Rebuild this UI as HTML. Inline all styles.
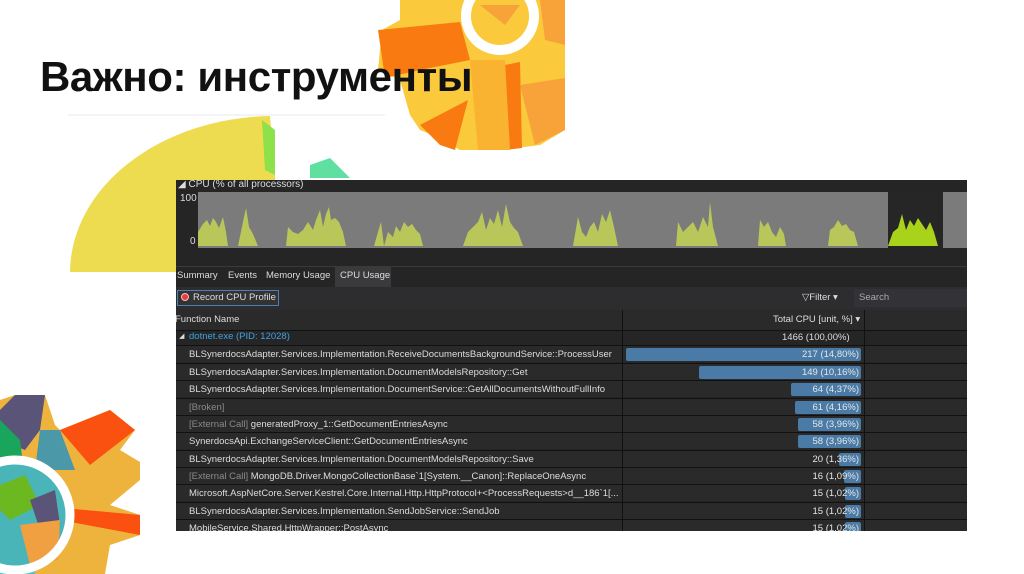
<!DOCTYPE html>
<html><head><meta charset="utf-8"><style>
*{margin:0;padding:0;box-sizing:border-box}
body{width:1024px;height:574px;background:#fff;position:relative;overflow:hidden;font-family:"Liberation Sans",sans-serif}
.abs{position:absolute}
h1{position:absolute;left:40px;top:53px;font-size:42px;font-weight:bold;color:#111;letter-spacing:-0.4px;font-family:"Liberation Sans","DejaVu Sans",sans-serif}
#panel{position:absolute;left:176px;top:180px;width:791px;height:351px;background:#252526;color:#ddd;font-size:9.5px;overflow:hidden}
.t{position:absolute;white-space:nowrap}
.row{position:absolute;left:0;width:791px;height:17px;border-top:1px solid #111;background:#2a2a2b}
.row .n{position:absolute;left:13px;top:3px;white-space:nowrap;color:#ddd}
.row .g{color:#8a8a8a}
.row .bar{position:absolute;top:2px;height:13px;background:#4a7ba6;border-radius:2px;right:106px}
.row .v{position:absolute;right:108px;top:3px;color:#e6e6e6}
</style></head><body>
<svg class="abs" style="left:0;top:0" width="1024" height="574">
 <!-- top right gear -->
 <g>
  <polygon points="400,0 565,0 565,130 540,145 500,150 460,150 440,138 420,130 410,115 400,80 378,70 382,30 400,20" fill="#fbc93c"/>
  <polygon points="378,30 460,22 470,60 420,70 385,78" fill="#f87a10"/>
  <polygon points="420,125 468,100 455,150 440,145" fill="#f87a10"/>
  <polygon points="505,65 520,62 522,148 505,150" fill="#f87a10"/>
  <polygon points="520,85 565,78 565,130 535,145" fill="#f8a23a"/>
  <polygon points="470,60 505,60 510,150 478,150" fill="#f9b330"/>
  <polygon points="540,0 565,0 565,45 545,40" fill="#f8a23a"/>
  <polygon points="480,5 520,5 505,25" fill="#f8a23a"/>
  <circle cx="500" cy="16" r="34" fill="none" stroke="#fff" stroke-width="10"/>
 </g>
 <!-- yellow semicircle -->
 <path d="M70,272 A205,157 0 0 1 270,116 L275,175 L275,272 Z" fill="#eedc50"/>
 <path d="M262,120 L275,130 L275,175 L265,170 Z" fill="#8de14a"/>
 <path d="M310,165 L330,158 L350,178 L310,178 Z" fill="#5fe0a0"/>
 <line x1="68" y1="115" x2="385" y2="115" stroke="#e8e8e8" stroke-width="1"/>
 <!-- bottom left gear -->
 <g>
  <polygon points="0,400 15,395 45,395 55,425 60,430 110,410 135,430 120,450 140,462 140,480 110,505 140,515 140,535 110,545 105,574 0,574" fill="#eeb33c"/>
  <polygon points="15,395 45,395 40,430 25,450 0,440 0,410" fill="#5a5478"/>
  <polygon points="0,420 20,440 25,480 0,470" fill="#19a55c"/>
  <polygon points="60,430 110,410 135,430 90,465" fill="#fa5010"/>
  <polygon points="40,430 60,430 75,470 35,470" fill="#4a98a8"/>
  <polygon points="30,505 140,515 140,535 60,520" fill="#fa5010"/>
  <polygon points="0,540 30,545 35,574 0,574" fill="#56c0c8"/>
  <circle cx="15" cy="515" r="55" fill="#4ab5b8"/>
  <polygon points="0,485 25,475 40,505 10,520 0,510" fill="#6bb820"/>
  <polygon points="30,500 55,490 60,525 40,530" fill="#5a5478"/>
  <polygon points="20,525 60,520 58,560 30,565" fill="#f0a040"/>
  <circle cx="15" cy="515" r="55" fill="none" stroke="#fff" stroke-width="9"/>
 </g>
</svg>
<h1>Важно: инструменты</h1>
<div id="panel">
 <div class="t" style="left:2px;top:-1px;font-size:10px;color:#ddd">◢ CPU (% of all processors)</div>
 <div class="t" style="left:4px;top:13px;font-size:10px">100</div>
 <div class="t" style="left:14px;top:56px;font-size:10px">0</div>
 <svg class="abs" style="left:22px;top:12px" width="769" height="56">
  <rect width="769" height="56" fill="#7b7b7b"/>
  <rect x="690" width="55" height="56" fill="#262626"/>
  <g fill="#b9c75a">
   <polygon points="0,54 0,40 5,32 9,28 12,34 15,26 18,30 21,36 25,25 28,40 30,54"/>
   <polygon points="40,54 45,30 48,16 51,35 55,42 60,54"/>
   <polygon points="88,54 90,35 95,40 100,42 105,38 110,30 115,38 118,28 122,18 125,35 128,22 131,15 133,28 137,26 141,30 145,40 148,54"/>
   <polygon points="176,54 180,40 183,30 186,54 190,40 195,45 198,34 202,40 206,30 210,35 214,32 218,38 222,42 225,54"/>
   <polygon points="265,54 270,40 275,35 280,30 284,20 288,38 292,26 296,32 300,18 304,35 308,12 312,30 316,36 320,40 325,54"/>
   <polygon points="375,54 380,25 384,40 388,45 392,35 396,30 400,40 404,22 408,30 412,18 416,35 420,54"/>
   <polygon points="478,54 480,30 485,40 490,35 495,30 500,40 505,25 510,35 512,10 515,35 520,54"/>
   <polygon points="560,54 562,28 566,35 570,30 574,40 578,45 582,35 586,42 588,54"/>
   <polygon points="630,54 632,38 636,35 640,28 644,34 648,32 652,38 656,40 660,54"/>
   <polygon points="690,54 695,40 700,36 704,22 708,38 712,28 716,34 720,26 724,32 728,38 732,30 736,40 740,54" fill="#a9d21a"/>
  </g>
 </svg>
 <div class="abs" style="left:0;top:86px;width:791px;height:1px;background:#3a3a3a"></div>
 <div class="t" style="left:1px;top:90px">Summary</div>
 <div class="t" style="left:52px;top:90px">Events</div>
 <div class="t" style="left:90px;top:90px">Memory Usage</div>
 <div class="abs" style="left:159px;top:87px;width:56px;height:20px;background:#3a3a3c"></div>
 <div class="t" style="left:164px;top:90px">CPU Usage</div>
 <div class="abs" style="left:0;top:107px;width:791px;height:23px;background:#2d2d30"></div>
 <div class="abs" style="left:1px;top:110px;width:102px;height:16px;border:1px solid #4d80b0;background:#333"></div>
 <div class="abs" style="left:5px;top:113px;width:8px;height:8px;border-radius:50%;background:#e04040;border:1px solid #fbb"></div>
 <div class="t" style="left:17px;top:112px">Record CPU Profile</div>
 <div class="t" style="left:626px;top:112px">▽Filter ▾</div>
 <div class="abs" style="left:678px;top:109px;width:113px;height:18px;background:#333337"></div>
 <div class="t" style="left:683px;top:112px;color:#aaa">Search</div>
 <div class="abs" style="left:0;top:130px;width:791px;height:21px;background:#2a2a2b;border-bottom:1px solid #111"></div>
 <div class="t" style="left:-1px;top:134px">Function Name</div>
 <div class="t" style="left:597px;top:134px">Total CPU [unit, %] ▾</div>
 <div class="t" style="left:3px;top:152px;font-size:7px">◢</div>
 <div class="t" style="left:13px;top:151px;color:#3fa2e0">dotnet.exe (PID: 12028)</div>
 <div class="t" style="left:606px;top:152px">1466 (100,00%)</div>
 <div class="row" style="top:165px"><div class="bar" style="width:235px"></div><div class="n">BLSynerdocsAdapter.Services.Implementation.ReceiveDocumentsBackgroundService::ProcessUser</div><div class="v">217 (14,80%)</div></div>
 <div class="row" style="top:183px"><div class="bar" style="width:162px"></div><div class="n">BLSynerdocsAdapter.Services.Implementation.DocumentModelsRepository::Get</div><div class="v">149 (10,16%)</div></div>
 <div class="row" style="top:200px"><div class="bar" style="width:70px"></div><div class="n">BLSynerdocsAdapter.Services.Implementation.DocumentService::GetAllDocumentsWithoutFullInfo</div><div class="v">64 (4,37%)</div></div>
 <div class="row" style="top:218px"><div class="bar" style="width:66px"></div><div class="n g">[Broken]</div><div class="v">61 (4,16%)</div></div>
 <div class="row" style="top:235px"><div class="bar" style="width:63px"></div><div class="n"><span class="g">[External Call]</span> generatedProxy_1::GetDocumentEntriesAsync</div><div class="v">58 (3,96%)</div></div>
 <div class="row" style="top:252px"><div class="bar" style="width:63px"></div><div class="n">SynerdocsApi.ExchangeServiceClient::GetDocumentEntriesAsync</div><div class="v">58 (3,96%)</div></div>
 <div class="row" style="top:270px"><div class="bar" style="width:22px"></div><div class="n">BLSynerdocsAdapter.Services.Implementation.DocumentModelsRepository::Save</div><div class="v">20 (1,36%)</div></div>
 <div class="row" style="top:287px"><div class="bar" style="width:17px"></div><div class="n"><span class="g">[External Call]</span> MongoDB.Driver.MongoCollectionBase`1[System.__Canon]::ReplaceOneAsync</div><div class="v">16 (1,09%)</div></div>
 <div class="row" style="top:304px"><div class="bar" style="width:16px"></div><div class="n">Microsoft.AspNetCore.Server.Kestrel.Core.Internal.Http.HttpProtocol+&lt;ProcessRequests&gt;d__186`1[...</div><div class="v">15 (1,02%)</div></div>
 <div class="row" style="top:322px"><div class="bar" style="width:16px"></div><div class="n">BLSynerdocsAdapter.Services.Implementation.SendJobService::SendJob</div><div class="v">15 (1,02%)</div></div>
 <div class="row" style="top:339px"><div class="bar" style="width:16px"></div><div class="n">MobileService.Shared.HttpWrapper::PostAsync</div><div class="v">15 (1,02%)</div></div>
 <div class="abs" style="left:446px;top:130px;width:1px;height:221px;background:#111"></div>
 <div class="abs" style="left:688px;top:130px;width:1px;height:221px;background:#111"></div>
</div>
</body></html>
